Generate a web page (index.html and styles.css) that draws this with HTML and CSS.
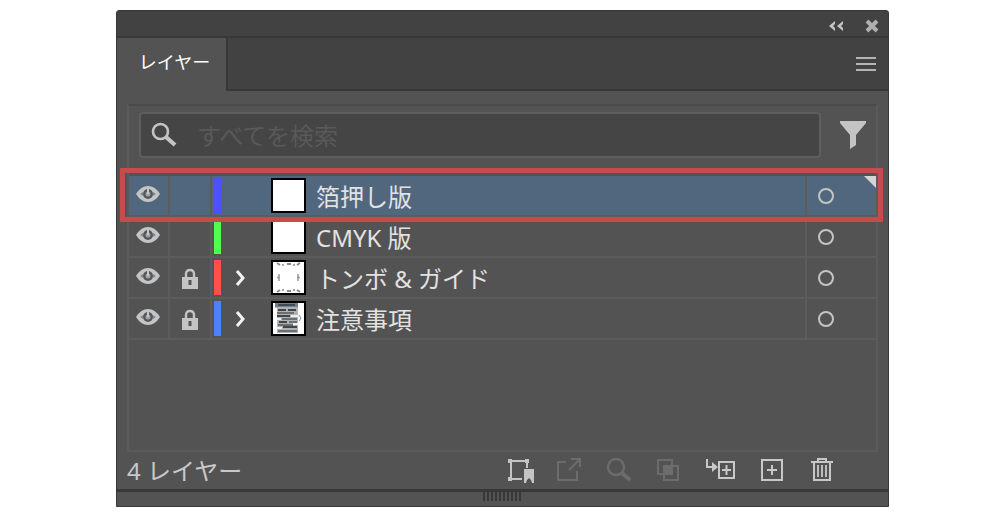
FILE: index.html
```html
<!DOCTYPE html>
<html lang="ja">
<head>
    <meta charset="UTF-8">
    <meta name="viewport" content="width=device-width, initial-scale=1.0">
    <title>レイヤー</title>
    <link rel="stylesheet" href="styles.css">
</head>
<body>

    <svg class="defs" width="0" height="0" aria-hidden="true">
        <symbol id="eye" viewBox="0 0 24 18">
            <path d="M0 9 Q5 1 12 1 T24 9 Q19 17 12 17 T0 9 Z" fill="#c3c5c7"/>
            <path d="M4 9 L7 7 V11 Z M20 9 L17 7 V11 Z" fill="#85888b"/>
            <circle cx="12" cy="9" r="5" fill="#55585b"/>
            <circle cx="12" cy="9" r="2.500" fill="#a0a3a6"/>
            <path d="M12 4 V9" stroke="#c3c5c7" stroke-width="2"/>
        </symbol>
        <symbol id="lock" viewBox="0 0 18 22">
            <path d="M5 10 V6 Q5 2 9 2 T13 6 V10" fill="none" stroke="#c4c4c4" stroke-width="2.4"/>
            <rect x="1" y="9" width="16" height="12" fill="#c4c4c4"/>
            <path d="M7.500 12 H10.500 V17 H7.500 Z" fill="#555"/>
        </symbol>
        <symbol id="arrow" viewBox="0 0 12 16">
            <path d="M2 1 L8 8 L2 15" fill="none" stroke="#f2f2f2" stroke-width="3"/>
        </symbol>
        <symbol id="magnifier" viewBox="0 0 26 26">
            <circle cx="9.500" cy="9.500" r="7.500" fill="none" stroke="currentColor" stroke-width="2.600"/>
            <path d="M15 15 L24 23" stroke="currentColor" stroke-width="4.200"/>
        </symbol>
    </svg>

    <div class="panel">
        <div class="titlebar">
            <button class="collapse" aria-label="折りたたむ">
                <svg width="16" height="10" viewBox="0 0 16 10"><path d="M7 0 L1 5 L7 10 V7 L5 5 L7 3 Z M15 0 L9 5 L15 10 V7 L13 5 L15 3 Z" fill="#c4c4c4"/></svg>
            </button>
            <button aria-label="閉じる">
                <svg width="14" height="14" viewBox="0 0 14 14"><path d="M2 2 L12 12 M12 2 L2 12" stroke="#b0b0b0" stroke-width="4"/></svg>
            </button>
        </div>

        <div class="tabs">
            <button class="tab">レイヤー</button>
            <button class="menu" aria-label="メニュー">
                <svg width="20" height="16" viewBox="0 0 20 16"><path d="M0 2 H20 M0 8 H20 M0 14 H20" stroke="#b4b4b4" stroke-width="2"/></svg>
            </button>
        </div>

        <div class="content">
            <div class="list">
                <div class="search-row">
                    <div class="search">
                        <svg width="26" height="26"><use href="#magnifier"/></svg>
                        <input type="text" aria-label="すべてを検索" placeholder="すべてを検索">
                    </div>
                    <button class="filter" aria-label="フィルター">
                        <svg width="28" height="30" viewBox="0 0 28 30"><path d="M1 1 H27 V3 L17 15 V25 L11 29 V15 L1 3 Z" fill="#c4c4c4"/></svg>
                    </button>
                </div>

                <ul class="layers">
                    <li class="layer selected">
                        <button class="cell" aria-label="表示"><svg width="24" height="18"><use href="#eye"/></svg></button>
                        <span class="cell"></span>
                        <span class="bar blue"></span>
                        <span class="expand"></span>
                        <span class="thumb"></span>
                        <span class="name">箔押し版</span>
                        <button class="target" aria-label="ターゲット"><span class="ring"></span></button>
                        <span class="corner"></span>
                        <span class="highlight"></span>
                    </li>
                    <li class="layer">
                        <button class="cell" aria-label="表示"><svg width="24" height="18"><use href="#eye"/></svg></button>
                        <span class="cell"></span>
                        <span class="bar green"></span>
                        <span class="expand"></span>
                        <span class="thumb"></span>
                        <span class="name">CMYK 版</span>
                        <button class="target" aria-label="ターゲット"><span class="ring"></span></button>
                    </li>
                    <li class="layer">
                        <button class="cell" aria-label="表示"><svg width="24" height="18"><use href="#eye"/></svg></button>
                        <button class="cell lock" aria-label="ロック"><svg width="18" height="22"><use href="#lock"/></svg></button>
                        <span class="bar red"></span>
                        <button class="expand" aria-label="展開"><svg width="12" height="16"><use href="#arrow"/></svg></button>
                        <span class="thumb">
                            <svg width="31" height="31" viewBox="0 0 31 31"><path d="M4 1 L7 3 M14 2 H18 M27 1 L24 3 M4 30 L7 28 M14 29 H18 M27 30 L24 28" stroke="#888" stroke-width="2"/><path d="M9 3 H11 M20 3 H22 M9 28 H11 M20 28 H22" stroke="#aaa" stroke-width="2"/><path d="M6 12 V19 M4 15.500 H7 M25 12 V19 M24 15.500 H27" stroke="#999" stroke-width="1.500"/></svg>
                        </span>
                        <span class="name">トンボ &amp; ガイド</span>
                        <button class="target" aria-label="ターゲット"><span class="ring"></span></button>
                    </li>
                    <li class="layer">
                        <button class="cell" aria-label="表示"><svg width="24" height="18"><use href="#eye"/></svg></button>
                        <button class="cell lock" aria-label="ロック"><svg width="18" height="22"><use href="#lock"/></svg></button>
                        <span class="bar lightblue"></span>
                        <button class="expand" aria-label="展開"><svg width="12" height="16"><use href="#arrow"/></svg></button>
                        <span class="thumb">
                            <svg width="31" height="31" viewBox="0 0 31 31">
                                <path d="M2 0 H25 V30 H4 V5 H2 Z" fill="#b0b3b5"/>
                                <path d="M2 0 H25 V4 H2 Z" fill="#6e8290"/>
                                <path d="M5 1 H22 V3 H5 Z" fill="#3f4b55"/>
                                <path d="M5 7 H13 M15 7 H23 M4 13 H17 M6 19 H14 M10 24 H24" stroke="#444" stroke-width="2"/>
                                <path d="M4 10 H21 M9 16 H24 M16 19 H24 M5 22 H20 M5 28 H24" stroke="#6c6f72" stroke-width="2"/>
                                <path d="M18 13 H26 M4 16 H8 M20 21 H26 M4 25 H9" stroke="#eee" stroke-width="2"/>
                                <path d="M26 12 L28 15 L26 18" fill="none" stroke="#888"/>
                            </svg>
                        </span>
                        <span class="name">注意事項</span>
                        <button class="target" aria-label="ターゲット"><span class="ring"></span></button>
                    </li>
                </ul>
            </div>
        </div>

        <div class="footer">
            <span class="count">4 レイヤー</span>
            <div class="tools">
                <button aria-label="書き出し用に追加">
                    <svg width="32" height="32" viewBox="0 0 32 32"><path d="M3 7 H23 M5 5 V26 M2 25 H16 M21 5 V14" fill="none" stroke="#c4c4c4" stroke-width="2"/><path d="M2 5 H6 V9 H2 Z M19 5 H23 V9 H19 Z M2 23 H6 V27 H2 Z M18 15 H28 V29 H26 L25 26 L23 24 L21 26 L20 29 H18 Z" fill="#c4c4c4"/></svg>
                </button>
                <button class="off" aria-label="書き出し">
                    <svg width="32" height="32" viewBox="0 0 32 32"><path d="M10 8 H2 V26 H21 V17 M13 16 L24 5 M15 5 H24 V13" fill="none" stroke="currentColor" stroke-width="2"/></svg>
                </button>
                <button class="off" aria-label="オブジェクトの位置">
                    <svg width="32" height="32" viewBox="0 0 32 32"><circle cx="10" cy="13" r="8" fill="none" stroke="currentColor" stroke-width="2.400"/><path d="M16 19 L24 26" stroke="currentColor" stroke-width="4"/></svg>
                </button>
                <button class="off" aria-label="クリッピングマスク">
                    <svg width="32" height="32" viewBox="0 0 32 32"><path d="M2 6 H16 V20 H2 Z M8 12 H22 V26 H8 Z" fill="none" stroke="currentColor" stroke-width="2"/><path d="M8 12 H16 V20 H8 Z" fill="currentColor"/></svg>
                </button>
                <button aria-label="新規サブレイヤー">
                    <svg width="32" height="32" viewBox="0 0 32 32"><path d="M1 5 V13 H8 M13 8 H28 V24 H13 Z M16 16 H25 M20.500 11 V21" fill="none" stroke="#c8c8c8" stroke-width="2"/><path d="M6 8 L12 13 L6 18 Z" fill="#c8c8c8"/></svg>
                </button>
                <button aria-label="新規レイヤー">
                    <svg width="32" height="32" viewBox="0 0 32 32"><path d="M6 6 H26 V26 H6 Z M11 16 H21 M16 11 V21" fill="none" stroke="#c8c8c8" stroke-width="2"/></svg>
                </button>
                <button aria-label="削除">
                    <svg width="32" height="32" viewBox="0 0 32 32"><path d="M5 8 H27 M12 8 V5 H20 V8 M8 8 V26 H24 V8" fill="none" stroke="#c8c8c8" stroke-width="2"/><path d="M12 11 V23 M16 11 V23 M20 11 V23" stroke="#c8c8c8" stroke-width="1.800"/></svg>
                </button>
            </div>
        </div>

        <div class="resize"><span class="grip"></span></div>
    </div>

</body>
</html>
```
FILE: styles.css
```css
* {
    box-sizing: border-box;
}
body {
    margin: 0;
    padding: 10px 116px;
    background-color: #fff;
    color: #e2e2e2;
    font-family: "Noto Sans", "Noto Sans CJK JP", sans-serif;
    font-size: 24px;
}
button {
    display: flex;
    align-items: center;
    justify-content: center;
    padding: 0;
    border: none;
    background: none;
    color: inherit;
    font: inherit;
    cursor: pointer;
}
.defs {
    position: absolute;
}
.panel {
    background-color: #535353;
    border: 1px solid #383838;
    border-radius: 3px 3px 0 0;
}
.titlebar {
    display: flex;
    align-items: center;
    justify-content: flex-end;
    gap: 21px;
    height: 27px;
    padding: 4px 9px 0 0;
    background-color: #424242;
    border-bottom: 2px solid #383838;
}
.tabs {
    display: flex;
    align-items: stretch;
    height: 53px;
    background-color: #424242;
}
.tab {
    width: 109px;
    padding: 0 0 8px 6px;
    background-color: #535353;
    color: #fff;
    font-size: 18px;
}
.menu {
    flex: 1;
    justify-content: flex-end;
    padding-right: 12px;
    border-left: 2px solid #383838;
    border-bottom: 2px solid #383838;
}
.content {
    padding: 13px 10px 0 10px;
}
.list {
    height: 348px;
    border: 2px solid #5b5b5b;
    border-top-color: #4a4a4a;
}
.search-row {
    display: flex;
    align-items: center;
    gap: 18px;
    margin: 6px 9px 18px 10px;
}
.search {
    flex: 1;
    display: flex;
    align-items: center;
    gap: 20px;
    height: 46px;
    padding: 0 10px;
    background-color: #454545;
    border: 2px solid #5e5e5e;
    border-radius: 4px;
    color: #c4c4c4;
}
.search input {
    flex: 1;
    min-width: 0;
    padding: 0;
    border: none;
    outline: none;
    background: none;
    color: #dcdcdc;
    font: inherit;
}
.search input::placeholder {
    color: #595959;
    opacity: 1;
}
.layers {
    margin: 0;
    padding: 0;
    list-style: none;
}
.layer {
    position: relative;
    display: flex;
    align-items: stretch;
    height: 41px;
    border-bottom: 2px solid #5c5c5c;
}
.selected {
    background-color: #50677e;
}
.cell {
    width: 41px;
    padding: 0 2px 3px 0;
    border-right: 2px solid #5c5c5c;
}
.cell + .cell {
    width: 42px;
}
.cell.lock {
    padding: 3px 0 0 0;
}
.bar {
    width: 7px;
    margin: 2px 0 2px 2px;
}
.blue {
    background-color: #4f50ff;
}
.green {
    background-color: #4fff4f;
}
.red {
    background-color: #ff4f4f;
}
.lightblue {
    background-color: #4f80ff;
}
.expand {
    width: 40px;
    margin-right: 10px;
}
.thumb {
    width: 35px;
    height: 35px;
    margin: 2px 10px 0 0;
    background-color: #fff;
    border: 2px solid #000;
}
.thumb svg {
    display: block;
}
.name {
    flex: 1;
    line-height: 41px;
    white-space: nowrap;
}
.target {
    width: 71px;
    justify-content: flex-start;
    padding-left: 11px;
    border-left: 2px solid #5c5c5c;
}
.ring {
    width: 16px;
    height: 16px;
    border: 2px solid #c4c4c4;
    border-radius: 50%;
}
.corner {
    position: absolute;
    top: 0;
    right: 0;
    border-top: 12px solid #d4d4d4;
    border-left: 12px solid transparent;
}
.highlight {
    position: absolute;
    z-index: 1;
    inset: -8px -7px -7px -9px;
    border: 5px solid #c74b4d;
    pointer-events: none;
}
.footer {
    display: flex;
    align-items: center;
    justify-content: space-between;
    height: 37px;
    padding: 0 41px 2px 10px;
}
.count {
    color: #c8c8c8;
}
.tools {
    display: flex;
}
.tools button {
    width: 50px;
}
.tools .off {
    color: #6c6c6c;
}
.resize {
    display: flex;
    justify-content: center;
    height: 17px;
    border-top: 3px solid #383838;
}
.grip {
    width: 39px;
    height: 9px;
    background: repeating-linear-gradient(to right, #383838 0 2px, #535353 2px 4px);
}
```
